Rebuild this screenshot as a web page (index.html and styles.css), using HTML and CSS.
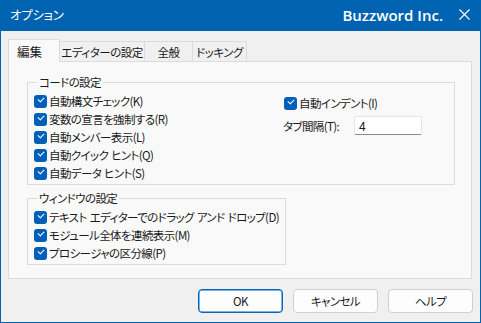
FILE: index.html
```html
<!DOCTYPE html>
<html lang="ja">
<head>
<meta charset="utf-8">
<link rel="stylesheet" href="styles.css">
</head>
<body>
<div class="window">
  <div class="titlebar">
    <span class="title">オプション</span>
    <span class="brand">Buzzword Inc.</span>
    <svg class="close" width="11" height="11" viewBox="0 0 11 11"><path d="M0.5 0.5 L10.5 10.5 M10.5 0.5 L0.5 10.5" stroke="#fff" stroke-width="1.1" fill="none"/></svg>
  </div>
  <div class="content">
    <div class="tabs">
      <div class="tab active t1">編集</div>
      <div class="tab t2">エディターの設定</div>
      <div class="tab t3">全般</div>
      <div class="tab t4">ドッキング</div>
    </div>
    <div class="panel">
      <fieldset class="group g1">
        <legend>コードの設定</legend>
        <div class="cols">
          <div class="col left">
            <label class="check"><span class="box"></span>自動構文チェック(K)</label>
            <label class="check"><span class="box"></span>変数の宣言を強制する(R)</label>
            <label class="check"><span class="box"></span>自動メンバー表示(L)</label>
            <label class="check"><span class="box"></span>自動クイック ヒント(Q)</label>
            <label class="check"><span class="box"></span>自動データ ヒント(S)</label>
          </div>
          <div class="col right">
            <label class="check"><span class="box"></span>自動インデント(I)</label>
            <div class="tabrow">
              <span class="lbl">タブ間隔(T):</span>
              <span class="input">4</span>
            </div>
          </div>
        </div>
      </fieldset>
      <fieldset class="group g2">
        <legend>ウィンドウの設定</legend>
        <label class="check"><span class="box"></span>テキスト エディターでのドラッグ アンド ドロップ(D)</label>
        <label class="check"><span class="box"></span>モジュール全体を連続表示(M)</label>
        <label class="check"><span class="box"></span>プロシージャの区分線(P)</label>
      </fieldset>
    </div>
    <div class="buttons">
      <div class="btn primary">OK</div>
      <div class="btn">キャンセル</div>
      <div class="btn">ヘルプ</div>
    </div>
  </div>
</div>
</body>
</html>
```

FILE: styles.css
```css
html, body {
  margin: 0;
  padding: 0;
  background: #f0f0f0;
}
body {
  font-family: "Noto Sans CJK JP", "Noto Sans", sans-serif;
  font-size: 11.5px;
  letter-spacing: -0.6px;
  word-spacing: 1px;
  font-feature-settings: "palt";
  color: #1a1a1a;
}
.window {
  width: 481px;
  height: 323px;
  box-sizing: border-box;
  border: 1px solid #0063b1;
  border-top: none;
  background: #f0f0f0;
  display: flex;
  flex-direction: column;
}
.titlebar {
  height: 31px;
  margin: 0 -1px;
  background: #0063b1;
  color: #fff;
  display: flex;
  align-items: center;
  padding-left: 10px;
  padding-right: 11px;
}
.title {
  font-size: 12.5px;
  letter-spacing: -0.3px;
  flex: 1;
  position: relative;
  top: -1px;
}
.brand {
  font-family: "Open Sans", "Noto Sans", sans-serif;
  font-weight: 600;
  font-size: 15px;
  letter-spacing: 0;
  word-spacing: 0;
  margin-right: 16px;
  position: relative;
  top: -1px;
}
.close {
  display: block;
  position: relative;
  top: -1px;
}
.content {
  padding: 8px 8px 0 7px;
  display: flex;
  flex-direction: column;
}
.tabs {
  display: flex;
  align-items: flex-end;
  height: 22px;
  position: relative;
  z-index: 1;
}
.tab {
  height: 20px;
  box-sizing: border-box;
  border: 1px solid #dcdcdc;
  border-bottom: none;
  border-left: none;
  display: flex;
  align-items: center;
  justify-content: center;
  background: #f0f0f0;
  white-space: nowrap;
  font-size: 11.5px;
  letter-spacing: -0.5px;
}
.tab.active {
  height: 23px;
  background: #f9f9f9;
  border-left: 1px solid #dcdcdc;
  justify-content: flex-start;
  padding-left: 8px;
  margin-bottom: -1px;
  font-size: 12.5px;
  letter-spacing: 0;
}
.t1 { width: 52px; }
.t2 { width: 85px; }
.t3 { width: 48px; }
.t4 { width: 54px; }
.panel {
  height: 218px;
  box-sizing: border-box;
  border: 1px solid #dcdcdc;
  background: #f9f9f9;
  padding: 12px 16px 0 18px;
}
.group {
  margin: 0;
  border: 1px solid #dcdcdc;
  padding: 0 0 0 6px;
  box-sizing: border-box;
}
.group legend {
  padding: 0 2px;
  margin-left: 3px;
  line-height: 16px;
}
.g1 {
  height: 111px;
}
.g2 {
  width: 259px;
  height: 75px;
  margin-top: 5px;
}
.cols {
  display: flex;
  margin-top: 2px;
}
.col {
  display: flex;
  flex-direction: column;
}
.col.left {
  width: 250px;
}
.col.right {
  padding-top: 2px;
}
.check {
  display: flex;
  align-items: center;
  height: 18px;
  white-space: nowrap;
}
.box {
  width: 13px;
  height: 13px;
  border-radius: 3px;
  background: #005fb8;
  margin-right: 2px;
  position: relative;
  flex: none;
}
.box::after {
  content: "";
  position: absolute;
  left: 3.5px;
  top: 2.5px;
  width: 5px;
  height: 3px;
  border-left: 1.2px solid #fff;
  border-bottom: 1.2px solid #fff;
  transform: rotate(-45deg);
  transform-origin: center;
}
.g2 .check:first-of-type {
  margin-top: 2px;
}
.tabrow {
  display: flex;
  align-items: center;
  margin-top: 4px;
  margin-left: -1px;
}
.lbl {
  width: 71px;
}
.input {
  width: 68px;
  height: 19px;
  box-sizing: border-box;
  background: #fff;
  border: 1px solid #e5e5e5;
  border-bottom: 1px solid #8a8a8a;
  border-radius: 2px;
  padding-left: 4px;
  line-height: 17px;
  font-size: 12px;
}
.buttons {
  display: flex;
  justify-content: flex-end;
  gap: 10px;
  margin-top: 10px;
  margin-right: -1px;
}
.btn {
  width: 85px;
  height: 24px;
  box-sizing: border-box;
  border: 1px solid #d0d0d0;
  border-radius: 4px;
  background: #fdfdfd;
  display: flex;
  align-items: center;
  justify-content: center;
}
.btn.primary {
  border: 1px solid #0067c0;
  box-shadow: inset 0 0 0 0.5px #0067c0;
}
```
